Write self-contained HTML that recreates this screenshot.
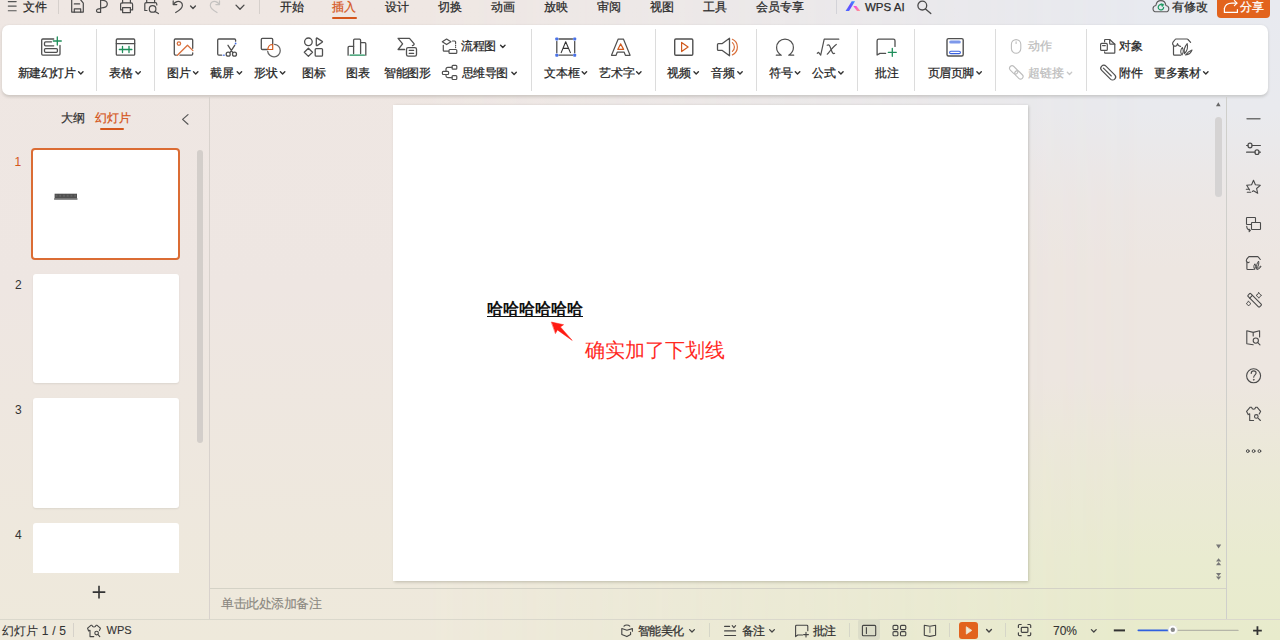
<!DOCTYPE html>
<html><head><meta charset="utf-8">
<style>
*{margin:0;padding:0;box-sizing:border-box}
html,body{width:1280px;height:640px;overflow:hidden}
body{position:relative;font-family:"Liberation Sans",sans-serif;color:#333;
background:linear-gradient(to bottom, #E8EAF0 0px, #E9EAEE 110px, #ECE7E5 200px, #EDE6E1 270px, #EDE6E0 380px, #EBE9D7 470px, #E9EBD0 560px, #E8EBCC 640px);
}
body::before{content:"";position:absolute;left:0;top:0;width:1280px;height:640px;z-index:-1;
background:linear-gradient(to bottom, #EFE7E3 0%, #EEE6E2 45%, #EEE9DB 100%);
-webkit-mask-image:linear-gradient(to right, #000 0px, #000 420px, rgba(0,0,0,0) 1150px);
mask-image:linear-gradient(to right, #000 0px, #000 420px, rgba(0,0,0,0) 1150px);
}
.a{position:absolute;white-space:nowrap;-webkit-text-stroke:0.25px currentColor}
.ns{-webkit-text-stroke:0}
.t12{font-size:12px;line-height:12px}
.t11{font-size:11px;line-height:11px}
.tab{font-size:12px;line-height:12px;top:1px;color:#2A2A2A}
.rb{font-size:12px;line-height:12px;top:67px;color:#262626}
.rs{font-size:12px;line-height:12px;color:#262626}
.sep{position:absolute;width:1px;background:#DCDCDC;top:29px;height:62px}
svg{position:absolute;left:0;top:0;overflow:visible}
</style></head><body>

<!-- top bar -->
<div class="a tab" style="left:23px">文件</div>
<div class="a" style="left:58px;top:0;width:1px;height:14px;background:#D6D0CC"></div>
<div class="a" style="left:259px;top:0;width:1px;height:14px;background:#D6D0CC"></div>
<div class="a tab" style="left:280px">开始</div>
<div class="a tab" style="left:332px;color:#D5561C">插入</div>
<div class="a" style="left:332px;top:17px;width:25px;height:2px;background:#D5561C;border-radius:1px"></div>
<div class="a tab" style="left:385px">设计</div>
<div class="a tab" style="left:438px">切换</div>
<div class="a tab" style="left:491px">动画</div>
<div class="a tab" style="left:544px">放映</div>
<div class="a tab" style="left:597px">审阅</div>
<div class="a tab" style="left:650px">视图</div>
<div class="a tab" style="left:703px">工具</div>
<div class="a tab" style="left:756px">会员专享</div>
<div class="a" style="left:836px;top:0;width:1px;height:14px;background:#D3D3D8"></div>
<div class="a" style="left:865px;top:0.5px;font-size:11.5px;line-height:12px;color:#2A2A2A;letter-spacing:0px">WPS AI</div>
<div class="a tab" style="left:1172px">有修改</div>
<div class="a" style="left:1217px;top:0;width:53px;height:18px;background:#E2631D;border-radius:0 0 4px 4px"></div>
<div class="a tab" style="left:1240px;color:#fff">分享</div>

<!-- ribbon panel -->
<div class="a" style="left:2px;top:25px;width:1266px;height:70px;background:#fff;border-radius:7px;box-shadow:0 1.5px 3px rgba(40,40,30,0.17)"></div>
<div class="sep" style="left:96px"></div>
<div class="sep" style="left:154px"></div>
<div class="sep" style="left:531px"></div>
<div class="sep" style="left:655px"></div>
<div class="sep" style="left:756px"></div>
<div class="sep" style="left:857px"></div>
<div class="sep" style="left:914px"></div>
<div class="sep" style="left:995px"></div>
<div class="sep" style="left:1086px"></div>

<div class="a rb" style="left:18px;letter-spacing:-0.6px">新建幻灯片</div>
<div class="a rb" style="left:109px">表格</div>
<div class="a rb" style="left:167px">图片</div>
<div class="a rb" style="left:210px">截屏</div>
<div class="a rb" style="left:254px">形状</div>
<div class="a rb" style="left:302px">图标</div>
<div class="a rb" style="left:346px">图表</div>
<div class="a rb" style="left:384px;letter-spacing:-0.5px">智能图形</div>
<div class="a rs" style="left:461px;top:40px;letter-spacing:-0.5px">流程图</div>
<div class="a rs" style="left:461.5px;top:67px;letter-spacing:-0.5px">思维导图</div>
<div class="a rb" style="left:544px">文本框</div>
<div class="a rb" style="left:599px">艺术字</div>
<div class="a rb" style="left:667px">视频</div>
<div class="a rb" style="left:711px">音频</div>
<div class="a rb" style="left:769px">符号</div>
<div class="a rb" style="left:812px">公式</div>
<div class="a rb" style="left:875px">批注</div>
<div class="a rb" style="left:927.5px;letter-spacing:-0.5px">页眉页脚</div>
<div class="a rs" style="left:1028px;top:40px;color:#BDBDBD">动作</div>
<div class="a rs" style="left:1028px;top:67px;color:#BDBDBD">超链接</div>
<div class="a rs" style="left:1119px;top:40px">对象</div>
<div class="a rs" style="left:1119px;top:67px">附件</div>
<div class="a rb" style="left:1154px;letter-spacing:-0.4px">更多素材</div>

<!-- left panel -->
<div class="a" style="left:209px;top:97px;width:1px;height:522px;background:#D8D2CD"></div>
<div class="a t12" style="left:61px;top:112px;color:#333">大纲</div>
<div class="a t12" style="left:95px;top:112px;color:#D5561C">幻灯片</div>
<div class="a" style="left:100px;top:128px;width:24px;height:2px;background:#D5561C;border-radius:1px"></div>

<div class="a" style="left:31px;top:148px;width:149px;height:112px;border:2px solid #DB6C34;border-radius:4px;background:#fff"></div>
<div class="a" style="left:33px;top:274px;width:146px;height:109px;background:#fff;border-radius:3px;box-shadow:0 1px 2px rgba(0,0,0,0.08)"></div>
<div class="a" style="left:33px;top:398px;width:146px;height:110px;background:#fff;border-radius:3px;box-shadow:0 1px 2px rgba(0,0,0,0.08)"></div>
<div class="a" style="left:33px;top:523px;width:146px;height:50px;background:#fff;border-radius:3px 3px 0 0"></div>
<div class="a t12 ns" style="left:14.5px;top:156px;color:#D5561C">1</div>
<div class="a t12 ns" style="left:15px;top:279px;color:#333">2</div>
<div class="a t12 ns" style="left:15px;top:404px;color:#333">3</div>
<div class="a t12 ns" style="left:15px;top:529px;color:#333">4</div>
<div class="a" style="left:197px;top:150px;width:6px;height:293px;background:#D3CECA;border-radius:3px"></div>

<!-- slide -->
<div class="a" style="left:393px;top:105px;width:635px;height:476px;background:#fff;box-shadow:0.5px 1px 3px rgba(30,30,10,0.24)"></div>
<div class="a ns" style="left:487px;top:300.5px;font-size:16px;line-height:16px;font-weight:bold;color:#111;text-decoration:underline;text-underline-offset:2px;text-decoration-thickness:1.4px">哈哈哈哈哈哈</div>
<div class="a ns" style="left:585px;top:340px;font-size:20px;line-height:20px;color:#FF2A1F">确实加了下划线</div>

<!-- notes -->
<div class="a" style="left:210px;top:588px;width:1016px;height:1px;background:#D4D2C6"></div>
<div class="a" style="left:221px;top:596.5px;font-size:13px;line-height:13px;color:#8A877F;letter-spacing:-0.5px;-webkit-text-stroke:0.1px currentColor">单击此处添加备注</div>

<!-- right sidebar -->
<div class="a" style="left:1226px;top:97px;width:1px;height:522px;background:#CFCFCB"></div>
<div class="a" style="left:1215px;top:117px;width:7px;height:80px;background:#D5D3D3;border-radius:3.5px"></div>

<!-- status bar -->
<div class="a" style="left:0;top:619px;width:1280px;height:1px;background:#DAD8CC"></div>
<div class="a t12" style="left:2px;top:625px;color:#333;-webkit-text-stroke:0.1px currentColor;word-spacing:0.4px">幻灯片 1 / 5</div>
<div class="a" style="left:73px;top:623px;width:1px;height:14px;background:#D6D2CA"></div>
<div class="a" style="left:106.5px;top:625px;font-size:11px;line-height:11px;color:#333;-webkit-text-stroke:0.1px currentColor">WPS</div>
<div class="a t12" style="left:638px;top:624.5px;color:#333;letter-spacing:-0.6px">智能美化</div>
<div class="a" style="left:709px;top:623px;width:1px;height:14px;background:#D6D6C8"></div>
<div class="a t12" style="left:742px;top:624.5px;color:#333;letter-spacing:-1.5px">备注</div>
<div class="a t12" style="left:813px;top:624.5px;color:#333;letter-spacing:-1px">批注</div>
<div class="a" style="left:849px;top:623px;width:1px;height:14px;background:#D6D6C8"></div>
<div class="a" style="left:858px;top:619px;width:22px;height:21px;background:#DCDDC9;border-radius:3px"></div>
<div class="a" style="left:949px;top:623px;width:1px;height:14px;background:#D6D6C8"></div>
<div class="a" style="left:959px;top:622px;width:19px;height:17px;background:#E2631D;border-radius:3px"></div>
<div class="a" style="left:1005px;top:623px;width:1px;height:14px;background:#D6D6C8"></div>
<div class="a t12" style="left:1053px;top:625px;color:#333;-webkit-text-stroke:0.1px currentColor">70%</div>

<svg width="1280" height="640" viewBox="0 0 1280 640" fill="none" stroke="#4A4A4A" stroke-width="1.3" stroke-linecap="round" stroke-linejoin="round">
<!-- TOP BAR ICONS -->
<g stroke="#555" stroke-width="1.1">
 <path d="M8.3,1.6H16.2M8.3,6.1H16.2M8.3,10.7H16.2"/>
</g>
<g stroke="#4A4A4A" stroke-width="1.2">
 <path d="M71.7,-2V12.1H83.3V3.2L79.2,-2"/>
 <path d="M74.3,12.1V8.9H80.7V12.1"/>
 <path d="M74.3,3.9H79.6"/>
 <path d="M100.6,-1.5V12.3"/>
 <path d="M100.6,0.2C104.5,0.2 107.3,1.6 107.3,4.1C107.3,6.6 104.5,8 100.6,8"/>
 <path d="M100.6,8.6C97.7,8.6 96.3,9.8 96.5,11.1C96.7,12.4 98.7,12.6 100.6,12.3"/>
 <path d="M122.6,2.8V-1.5H130.4V2.8"/>
 <path d="M122.6,9.9H120.6V4.4C120.6,3.4 121.2,2.8 122.2,2.8H131C132,2.8 132.6,3.4 132.6,4.4V9.9H130.4"/>
 <path d="M122.6,7.6H130.4V12.6H122.6Z"/>
 <path d="M146.7,2.6V-1.5H154.6V2.6"/>
 <path d="M147,10.5H144.8V4.2C144.8,3.2 145.4,2.6 146.4,2.6H155.2C156.2,2.6 156.8,3.2 156.8,4.2V5"/>
 <circle cx="152.6" cy="8.9" r="3.3"/>
 <path d="M155,11.4L158.4,13.6"/>
 <path d="M175.7,12.5C178.5,11 182.4,8.7 182.4,5.3C182.4,2.2 179.5,0.8 176.9,1.6C175.6,2 174.3,3 173.6,4.2"/>
 <path d="M173.2,0.9V4.6H176.8"/>
 <path d="M190.6,6.1L193,8.4L195.4,6.1" stroke-width="1.4"/>
 <path d="M236,5.1L240,9.3L244,5.1" stroke-width="1.3"/>
</g>
<g stroke="#C4C2C0" stroke-width="1.2">
 <path d="M217,12.5C214.2,11 210.3,8.7 210.3,5.3C210.3,2.2 213.2,0.8 215.8,1.6C217.1,2 218.4,3 219.1,4.2"/>
 <path d="M219.5,0.9V4.6H215.9"/>
</g>
<defs>
 <linearGradient id="gAI1" x1="0" y1="1" x2="1" y2="0"><stop offset="0" stop-color="#4A6BFF"/><stop offset="0.5" stop-color="#6A4BFF"/><stop offset="1" stop-color="#2F9BFF"/></linearGradient>
 <linearGradient id="gAI2" x1="0" y1="0" x2="1" y2="1"><stop offset="0" stop-color="#F53DEB"/><stop offset="1" stop-color="#FF9A8A"/></linearGradient>
</defs>
<path d="M845.6,11L851.7,1.2H855L849.1,11Z" fill="url(#gAI1)" stroke="none"/>
<path d="M853.3,5.9H856.3L860.4,11H857Z" fill="url(#gAI2)" stroke="none"/>
<g stroke="#4A4A4A" stroke-width="1.3">
 <circle cx="922.3" cy="5.6" r="4.4"/>
 <path d="M925.5,8.9L930.8,13.6"/>
</g>
<path d="M1156.6,11.8H1165.6C1167.6,11.8 1168.8,10.4 1168.8,8.7C1168.8,6.9 1167.6,5.7 1165.9,5.5C1165.5,2.6 1163.5,0.6 1160.9,0.6C1158.3,0.6 1156.3,2.6 1155.9,5.5C1154.2,5.7 1153,6.9 1153,8.7C1153,10.4 1154.4,11.8 1156.6,11.8Z" stroke="#5A5A5A" stroke-width="1.1"/>
<path d="M1163.6,7.4A2.7,2.7 0 1 1 1162.4,5" stroke="#1E9A62" stroke-width="1.2"/>
<path d="M1161.2,3.6L1164,4.4L1162.4,6.6Z" fill="#1E9A62" stroke="#1E9A62" stroke-width="0.5"/>
<g stroke="#FFFFFF" stroke-width="1.2">
 <path d="M1224.4,8.6V12.4H1237.4V9.6"/>
 <path d="M1224.4,8.6C1225,4.8 1228.3,3.1 1232,3.1H1236.8"/>
 <path d="M1234.4,0.6L1237,3.1L1234.4,5.6"/>
</g>

<!-- RIBBON ICONS -->
<g stroke="#505050" stroke-width="1.3">
 <!-- new slide -->
 <path d="M53.7,39H42.8C42.2,39 41.7,39.5 41.7,40.1V54.1C41.7,54.7 42.2,55.2 42.8,55.2H58.9C59.5,55.2 60,54.7 60,54.1V45.5"/>
 <path d="M51.5,41.8H45.6C45,41.8 44.5,42.3 44.5,42.9V44.7C44.5,45.3 45,45.8 45.6,45.8H53.7"/>
 <rect x="44.5" y="48.6" width="12.9" height="3.7" rx="1"/>
 <!-- table -->
 <rect x="116.3" y="39" width="18.4" height="16.2" rx="1"/>
 <path d="M116.3,43.6H134.7"/>
 <!-- picture -->
 <path d="M192.7,48.3V40.1C192.7,39.5 192.2,39 191.6,39H175.4C174.8,39 174.3,39.5 174.3,40.1V54.1C174.3,54.7 174.8,55.2 175.4,55.2H176.3"/>
 <path d="M180,55.2H191.6C192.2,55.2 192.7,54.7 192.7,54.1V52.8"/>
 <!-- screenshot -->
 <path d="M221.6,55.2H218.8C218.2,55.2 217.7,54.7 217.7,54.1V40.1C217.7,39.5 218.2,39 218.8,39H234.5C235.1,39 235.6,39.5 235.6,40.1V41.2"/>
 <circle cx="228.2" cy="54.2" r="2"/>
 <circle cx="234.5" cy="54.2" r="2"/>
 <path d="M228,45.3L232.6,52.4M234.7,45.3L230.1,52.4"/>
 <!-- shape -->
 <path d="M267.5,49.5H262.4C261.8,49.5 261.3,49 261.3,48.4V39.4C261.3,38.8 261.8,38.3 262.4,38.3H271.6C272.2,38.3 272.7,38.8 272.7,39.4V44.2"/>
 <path d="M274.6,44.3A6.3,6.3 0 1 1 267.7,51.3" stroke="#666"/>
 <!-- icon -->
 <circle cx="308.4" cy="41.8" r="3.8"/>
 <path d="M316.3,38.6V45.1C316.3,45.6 316.7,45.8 317.1,45.6L322.2,42.2C322.6,42 322.6,41.6 322.2,41.4L317.1,38.1C316.7,37.9 316.3,38.1 316.3,38.6Z"/>
 <path d="M308.4,48.2L312.5,52.3L308.4,56.4L304.3,52.3Z"/>
 <rect x="315.2" y="48.6" width="7.3" height="7.6" rx="1"/>
 <!-- chart -->
 <path d="M348.1,55.2V47.4C348.1,46.8 348.5,46.4 349.1,46.4H353.6"/>
 <path d="M353.6,53.5V40.2C353.6,39.6 354,39.2 354.6,39.2H359.6C360.2,39.2 360.6,39.6 360.6,40.2V53.5"/>
 <path d="M360.6,42.7H364.8C365.4,42.7 365.8,43.1 365.8,43.7V55.2"/>
 <!-- smart art -->
 <path d="M404.6,49.5H398.1L402.6,43.8L398.1,38.3H409.5L414,43.6C414.4,44.1 414.1,45 412.4,45.6"/>
 <rect x="406.5" y="47.6" width="10" height="8.6" rx="1.6"/>
 <path d="M409.3,50.4H413.6M409.3,53.4H413.6"/>
 <!-- flowchart (small) -->
 <path d="M446.6,39L450.9,41.8L446.6,44.6L442.3,41.8Z" stroke-width="1.2"/>
 <path d="M452.5,41H454.6C455.2,41 455.6,41.4 455.6,42V43.5" stroke-width="1.2"/>
 <path d="M455.6,45V45.6M455.6,47V47.6" stroke-width="1.2"/>
 <path d="M443.3,45.3V50.6C443.3,51 443.6,51.2 444,51.2H448.6" stroke-width="1.2"/>
 <rect x="449" y="49.5" width="7.8" height="3.9" rx="0.9" stroke-width="1.2"/>
 <!-- mindmap -->
 <rect x="442.4" y="71.3" width="6.2" height="3.2" rx="0.9" stroke-width="1.2"/>
 <rect x="452.1" y="65.3" width="4.7" height="3.9" rx="0.9" stroke-width="1.2"/>
 <rect x="452.1" y="75.6" width="4.7" height="3.9" rx="0.9" stroke-width="1.2"/>
 <path d="M446,71.3V69.2C446,68 446.7,67.3 447.9,67.3H452.1" stroke-width="1.2"/>
 <path d="M446,74.5V76.1C446,77.1 446.7,77.6 447.9,77.6H452.1" stroke-width="1.2"/>
 <!-- textbox -->
 <path d="M559,39H572.5M559,55.2H572.5M556.8,41.5V52.8M574.7,41.5V52.8"/>
 <path d="M561.2,52.6L565.7,41.8L570.4,52.6M563.1,48.4H568.4" stroke-width="1.1" stroke="#333"/>
 <!-- wordart -->
 <path d="M611.5,55.3L618.2,39.1H623.4L630.1,55.3H625.4L624.2,52.2H617.2L616.1,55.3Z" stroke-width="1.2"/>
 <!-- video -->
 <rect x="674.7" y="39" width="18.1" height="16.2" rx="1.2" stroke-width="1.4"/>
 <!-- audio -->
 <path d="M718.5,43.6H722.3L729.5,38.3V55.8L722.3,50.4H718.5C717.9,50.4 717.5,50 717.5,49.4V44.6C717.5,44 717.9,43.6 718.5,43.6Z"/>
 <!-- omega -->
 <path d="M776.3,55.2H781.3C778,53.2 776.6,50.5 776.6,47.5C776.6,42.6 780.3,39.1 785,39.1C789.7,39.1 793.4,42.6 793.4,47.5C793.4,50.5 792,53.2 788.7,55.2H793.7" stroke-width="1.2"/>
 <!-- sqrt x -->
 <path d="M817.3,53.3L818.6,52.3L820.7,55.2L824.2,39.2H838.8" stroke-width="1.2"/>
 <path d="M827.2,45.2C829.2,44.1 829.8,45.8 830.8,48.6C831.8,51.5 832.6,54.4 834.6,53.3" stroke-width="1.2"/>
 <path d="M836.3,44.5C833.6,46.2 830.2,50.8 827.3,54.2" stroke-width="1.2"/>
 <!-- comment -->
 <path d="M885.6,53.4H879.9L877.1,55V40.8C877.1,39.9 877.8,39.2 878.7,39.2H893.4C894.3,39.2 895,39.9 895,40.8V46.4"/>
 <!-- header footer -->
 <rect x="947" y="38.6" width="16.2" height="17.4" rx="1.5" stroke-width="1.4"/>
 <!-- object -->
 <path d="M1104.6,41.8V40.1C1104.6,39.8 1104.9,39.5 1105.2,39.5H1109.7L1114.8,44.2V52.6C1114.8,52.9 1114.5,53.2 1114.2,53.2H1105.2C1104.9,53.2 1104.6,52.9 1104.6,52.6V51.8" stroke-width="1.2"/>
 <path d="M1109.7,39.5V43.6C1109.7,43.9 1110,44.2 1110.3,44.2H1114.8" stroke-width="1.2"/>
 <rect x="1100.6" y="43.4" width="6.7" height="7" rx="1" stroke-width="1.2"/>
 <path d="M1102.6,45.6H1105.3" stroke-width="1.2"/>
 <!-- attachment -->
 <g transform="translate(1108.2,72.6) rotate(45)"><rect x="-9.2" y="-3" width="18.4" height="6" rx="3" stroke-width="1.2"/><path d="M-6.6,0.2H4.6" stroke-width="1.1"/></g>
 <!-- more material -->
 <path d="M1180.6,55.2H1174.4C1173.9,55.2 1173.5,54.8 1173.5,54.3V46.2" stroke-width="1.2"/>
 <path d="M1190.6,42.4L1188,39.5C1187.8,39.2 1187.5,39 1187.1,39H1176C1175.6,39 1175.3,39.2 1175.1,39.5L1172.9,42.3C1172.4,43.1 1172.6,44.5 1173.5,45.5C1174.3,46.3 1175.6,46.3 1176.4,45.8C1177,45.4 1177.4,44.4 1177.5,43.6C1177.7,44.5 1178.2,45.4 1178.9,45.8C1179.4,46.1 1180,46.3 1180.6,46.3" stroke-width="1.2"/>
 <path d="M1182,55C1180.4,53 1180.5,49.8 1182.3,47.5C1183.5,49.5 1183.6,52.6 1182,55Z" stroke-width="1.1"/>
 <path d="M1184.5,53.6C1183.8,50.5 1184.9,46.4 1187.2,43.7C1188,46.8 1187.2,50.9 1184.5,53.6Z" stroke-width="1.1"/>
 <path d="M1185.5,55C1187.2,52.6 1189.3,50.8 1192,50C1191.1,52.8 1188.8,54.6 1185.5,55Z" stroke-width="1.1"/>
</g>
<g stroke="#BDBDBD" stroke-width="1.1">
 <rect x="1011.4" y="39.6" width="9.4" height="13.6" rx="4.7"/>
 <path d="M1016.1,41.8V43.4"/>
 <rect x="-4.8" y="-2.5" width="9.6" height="5" rx="2.5" transform="translate(1013.7,69.9) rotate(45)"/>
 <rect x="-4.8" y="-2.5" width="9.6" height="5" rx="2.5" transform="translate(1018.9,74.9) rotate(45)"/>
</g>
<g stroke="#1E8E5A" stroke-width="1.3">
 <path d="M57.3,37V45M53.3,41H61.3"/>
 <path d="M119.3,49.5H131.9M122.5,46.3V52.6M129,46.3V52.6"/>
 <path d="M350,55.2H364.4" stroke-width="1.2"/>
 <path d="M892.3,48.3V56.3M888.3,52.3H896.3"/>
</g>
<g stroke="#D9703C" stroke-width="1.3">
 <circle cx="178.9" cy="43.6" r="1.7"/>
 <path d="M177.4,55.3L187.5,45.3L192.9,50.6"/>
 <path d="M267.8,49.5H272.7V44.5C270,44.5 268,46.6 267.8,49.5Z" stroke="#D05A1E" stroke-width="1.2"/>
 <path d="M620.6,43.9L617.8,49.4H623.6Z" stroke="#D05A1E" stroke-width="1.2"/>
 <path d="M681.6,42.4V51.6L688.1,47Z" stroke="#D05A1E" stroke-width="1.2"/>
 <path d="M732.4,42.6A5.8,5.8 0 0 1 732.4,51.4" stroke-width="1.2"/>
 <path d="M732.4,39.3A8.6,8.6 0 0 1 732.4,54.9" stroke-width="1.2"/>
</g>
<g fill="#4A72E8" stroke="none">
 <rect x="555.3" y="37.5" width="3" height="3" rx="0.8"/>
 <rect x="573.2" y="37.5" width="3" height="3" rx="0.8"/>
 <rect x="555.3" y="53.7" width="3" height="3" rx="0.8"/>
 <rect x="573.2" y="53.7" width="3" height="3" rx="0.8"/>
 <circle cx="235.6" cy="43.5" r="0.9"/>
 <rect x="222.8" y="54.6" width="2" height="1.2"/>
 <rect x="949.2" y="40.5" width="11.6" height="3.1" rx="1.5" fill="#7D98EA"/>
</g>
<rect x="949.6" y="51.2" width="10.8" height="2.4" rx="1.2" stroke="#3A62DF" stroke-width="1.1"/>

<path d="M78.6,71.8L80.8,74.0L83.0,71.8 M135.9,71.8L138.1,74.0L140.3,71.8 M193.5,71.8L195.7,74.0L197.9,71.8 M237.2,71.8L239.4,74.0L241.6,71.8 M280.4,71.8L282.6,74.0L284.8,71.8 M500.6,45.3L502.8,47.5L505.0,45.3 M511.9,72.3L514.1,74.5L516.3,72.3 M582.2,71.8L584.4,74.0L586.6,71.8 M636.6,71.8L638.8,74.0L641.0,71.8 M694.0,71.8L696.2,74.0L698.4,71.8 M737.8,71.8L740.0,74.0L742.2,71.8 M795.3,71.8L797.5,74.0L799.8,71.8 M838.7,71.8L840.9,74.0L843.1,71.8 M976.9,71.8L979.1,74.0L981.3,71.8 M1203.6,71.8L1205.8,74.0L1208.0,71.8" stroke="#333" stroke-width="1.4"/>
<path d="M1067.3,72.3L1069.5,74.5L1071.7,72.3" stroke="#C8C8C8" stroke-width="1.3"/>
<path d="M551.6,322.1L563.6,324.7L560.4,326.9L572.2,340.4L557.4,329.9L555.6,333.3Z" fill="#FF1A12" stroke="#FF1A12" stroke-width="0.5"/>
<!-- LEFT PANEL -->
<path d="M188,114.6L182.6,119.4L188,124.2" stroke="#555" stroke-width="1.2"/>
<defs><pattern id="thp" x="54.5" y="193.5" width="3.75" height="5" patternUnits="userSpaceOnUse"><rect width="3.75" height="5" fill="#7A7A7A"/><rect x="0.9" y="1.1" width="2" height="2.2" fill="#D0D0D0"/></pattern></defs>
<rect x="54.6" y="193.7" width="22.4" height="4.6" fill="url(#thp)" stroke="none"/>
<path d="M54.5,199H77.1" stroke="#222" stroke-width="1"/>
<path d="M99,585.8V598.4M92.7,592.1H105.3" stroke="#333" stroke-width="1.6" stroke-linecap="butt"/>

<!-- RIGHT SIDEBAR -->
<path d="M1216,106.2L1218.3,102.2L1220.6,106.2Z" fill="#666" stroke="none"/>
<path d="M1216,544.6L1218.6,548.5L1221.2,544.6Z" fill="#777" stroke="none"/>
<path d="M1216,561.6L1218.6,558.3L1221.2,561.6Z M1216,565.2L1218.6,562L1221.2,565.2Z" fill="#777" stroke="none"/>
<path d="M1216,573L1218.6,576.3L1221.2,573Z M1216,576.6L1218.6,579.8L1221.2,576.6Z" fill="#777" stroke="none"/>
<g stroke="#4A4A4A" stroke-width="1.2">
 <path d="M1247,118.8H1260" stroke="#707070" stroke-width="1.4"/>
 <path d="M1246.6,145.5H1248M1252,145.5H1260.4M1246.6,152.2H1255M1259,152.2H1260.4"/>
 <rect x="1248" y="143.2" width="4" height="4.6" rx="2"/>
 <rect x="1255" y="149.9" width="4" height="4.6" rx="2"/>
 <path d="M1249.6,190L1246.7,185.3L1251.6,184.8L1253.5,180.3L1255.4,184.8L1260.3,185.3L1256.6,188.5L1257.7,193.3L1253.5,190.8L1252.3,191.5" stroke-width="1.1"/>
 <path d="M1246.3,189.3H1249.2M1247.3,192.3H1250.8" stroke-width="1.1"/>
 <path d="M1251.5,224.5H1247.1C1246.8,224.5 1246.5,224.2 1246.5,223.9V218.1C1246.5,217.8 1246.8,217.5 1247.1,217.5H1254.9C1255.2,217.5 1255.5,217.8 1255.5,218.1V222.5" stroke-width="1.1"/>
 <rect x="1251.5" y="222.5" width="9" height="7" rx="0.6" stroke-width="1.1"/>
 <path d="M1246.7,226.3C1246.9,228.7 1248.3,230.3 1250.3,230.4M1249,229.1L1250.4,230.4L1249.1,231.7" stroke-width="1.1"/>
 <path d="M1253.4,269.5H1247.6C1247.2,269.5 1246.9,269.2 1246.9,268.8V262.6" stroke-width="1.1"/>
 <path d="M1260.3,259.5L1258.4,257.1C1258.2,256.8 1257.9,256.6 1257.6,256.6H1249.2C1248.9,256.6 1248.6,256.8 1248.4,257.1L1246.6,259.4C1246.2,260.1 1246.3,261.4 1247,262C1247.6,262.6 1248.6,262.6 1249.2,262.1" stroke-width="1.1"/>
 <path d="M1254.6,269.2C1253.5,267.8 1253.5,265.4 1254.9,263.8C1255.8,265.3 1255.8,267.6 1254.6,269.2Z M1256.6,268.4C1256.1,266.1 1256.9,263.1 1258.6,261.1C1259.2,263.4 1258.6,266.5 1256.6,268.4Z M1257.3,269.3C1258.6,267.6 1260.1,266.3 1261,266C1260.5,268 1259.3,269.1 1257.3,269.3Z" stroke-width="1"/>
 <g transform="translate(1254.6,300.3) rotate(45)"><rect x="-8.2" y="-1.9" width="16.4" height="3.8" rx="0.8" stroke-width="1.1"/><path d="M-5,-1.9V1.9" stroke-width="1.1"/></g>
 <path d="M1258.8,292.6L1259.9,294.3L1261.6,295.4L1259.9,296.5L1258.8,298.2L1257.7,296.5L1256,295.4L1257.7,294.3Z" stroke-width="0.9"/>
 <path d="M1248.6,301.2L1249.6,302.6L1251,303.6L1249.6,304.6L1248.6,306L1247.6,304.6L1246.2,303.6L1247.6,302.6Z" stroke-width="0.9"/>
 <path d="M1253.2,344.8L1246.8,343.8V330.8L1253.2,332.4L1259.6,330.8V337M1253.2,332.4V336" stroke-width="1.1"/>
 <circle cx="1255.8" cy="340.6" r="2.6" stroke-width="1.1"/>
 <path d="M1257.8,342.6L1260,344.8" stroke-width="1.1"/>
 <circle cx="1253.6" cy="375.8" r="7" stroke-width="1.1"/>
 <path d="M1251.2,373.4C1251.2,371.9 1252.3,370.9 1253.7,370.9C1255.1,370.9 1256.1,371.9 1256.1,373.1C1256.1,374.8 1253.7,375 1253.7,377.3" stroke-width="1.1"/>
 <circle cx="1253.7" cy="379.8" r="0.4" fill="#4A4A4A" stroke-width="0.8"/>
 <path d="M1253.6,420.5H1249.7V413.7L1248.2,414.6L1246.6,411.4L1250.2,407.2H1251.5C1251.8,408.5 1252.7,409.3 1253.6,409.3C1254.5,409.3 1255.4,408.5 1255.7,407.2H1257L1260.6,411.4L1259.2,414" stroke-width="1.1"/>
 <circle cx="1256.3" cy="416.4" r="1.8" stroke-width="1.1"/>
 <path d="M1258.3,418.4L1260.4,420.5" stroke-width="1.1"/>
 <circle cx="1247.8" cy="451.1" r="1.4" stroke-width="1"/>
 <circle cx="1253.6" cy="451.1" r="1.4" stroke-width="1"/>
 <circle cx="1259.4" cy="451.1" r="1.4" stroke-width="1"/>
</g>

<!-- STATUS BAR -->
<g stroke="#444" stroke-width="1.1">
 <path d="M93.8,636.6H90V630.3L88.6,631L87.6,628.2L90.9,625.3H92C92.3,626.4 93.1,627 94,627C94.9,627 95.7,626.4 96,625.3H97.1L100.4,628.2L99.5,630.4"/>
 <circle cx="96.6" cy="633.1" r="1.8"/>
 <path d="M98,634.6L99.8,636.6"/>
 <path d="M624,626.2C625.3,624.6 628.3,624.6 629.8,626.2" />
 <path d="M621.8,628.6V634.4L626.9,636.6L630.6,634.6V632.2M632.4,628.6V631.3M621.8,628.6L626.9,630.2L632.4,628.6" />
 <path d="M724.6,626.4H729.6M724.6,630.9H735.6M724.6,635.5H735.6M732.2,625.6L733.9,627.6L735.6,625.6"/>
 <path d="M689.6,629.6L692,632L694.4,629.6" stroke-width="1.3"/>
 <path d="M769.6,629.6L772,632L774.4,629.6" stroke-width="1.3"/>
 <path d="M802.5,635H797.7L795.6,636.6V626.2C795.6,625.7 796,625.3 796.5,625.3H806.9C807.4,625.3 807.8,625.7 807.8,626.2V630.7"/>
 <path d="M806,632.2V637M803.6,634.6H808.4"/>
 <rect x="862.4" y="625.4" width="13.3" height="10.3" rx="1"/>
 <path d="M866.4,627.6V633.5"/>
 <rect x="893" y="625.4" width="4.9" height="4.2" rx="1"/>
 <rect x="900.5" y="625.4" width="5.3" height="4.2" rx="1"/>
 <rect x="893" y="631.6" width="4.9" height="4.2" rx="1"/>
 <rect x="900.5" y="631.6" width="5.3" height="4.2" rx="1"/>
 <path d="M929.9,636.4L935.6,635.3V625.3L929.9,626.3L924.3,625.3V635.3Z"/>
 <path d="M929.9,627V632.6" stroke="#777"/>
 <path d="M986.6,629.6L989,632L991.4,629.6" stroke-width="1.4"/>
 <path d="M1018.4,627.4V625.6C1018.4,625 1018.9,624.5 1019.5,624.5H1021.2M1027.9,624.5H1029.6C1030.2,624.5 1030.7,625 1030.7,625.6V627.4M1030.7,632.8V634.6C1030.7,635.2 1030.2,635.7 1029.6,635.7H1027.9M1021.2,635.7H1019.5C1018.9,635.7 1018.4,635.2 1018.4,634.6V632.8" stroke-width="1.2"/>
 <rect x="1021.3" y="627.4" width="6.6" height="5" rx="0.8" stroke-width="1.2"/>
 <path d="M1091.4,629.6L1093.8,632L1096.2,629.6" stroke-width="1.3"/>
 <path d="M1113.8,630.4H1125" stroke-width="2" stroke-linecap="butt" stroke="#333"/>
 <path d="M1253.1,630.7H1261.8M1257.45,626.3V635.1" stroke-width="1.8" stroke-linecap="butt" stroke="#333"/>
</g>
<path d="M966.3,627.1V634.1L971.5,630.6Z" fill="#EEEBD8" stroke="#EEEBD8" stroke-width="0.8"/>
<path d="M1138.3,630.4H1168.5" stroke="#3060E0" stroke-width="1.6"/>
<path d="M1176,630.4H1238" stroke="#B5B5A8" stroke-width="1.4"/>
<circle cx="1172.8" cy="629.8" r="4.6" fill="#fff" stroke="#E2E2D8" stroke-width="0.8"/>
<circle cx="1172.8" cy="629.8" r="2.2" fill="#8A8A8A" stroke="none"/>
</svg>
</body></html>
